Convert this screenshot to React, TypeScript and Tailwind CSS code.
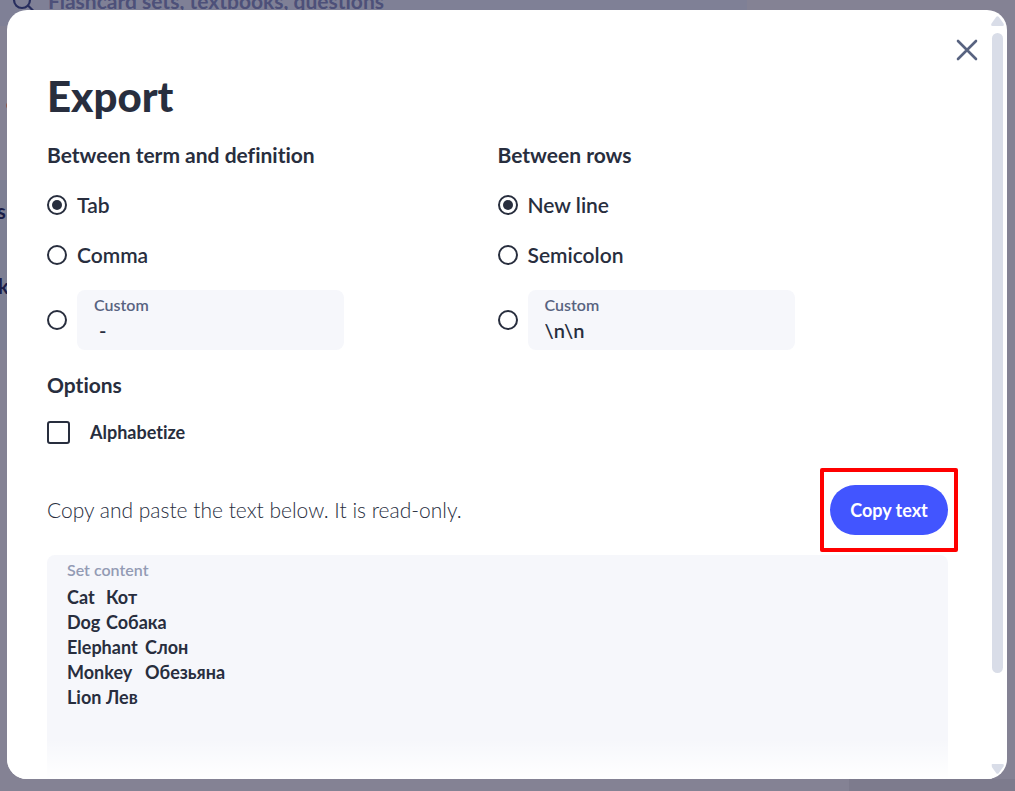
import { useState } from "react";

type Choice = { value: string; label: string };

type DelimiterProps = {
  title: string;
  name: string;
  choices: Choice[];
  custom: string;
};

function Radio({ id, name, checked, label, onSelect }: { id: string; name: string; checked: boolean; label?: string; onSelect: () => void }) {
  return (
    <input
      id={id}
      type="radio"
      name={name}
      checked={checked}
      aria-label={label}
      onChange={onSelect}
      className="size-5 shrink-0 appearance-none rounded-full border-2 border-[#282e3e] bg-white bg-clip-content p-[3px] checked:bg-[#282e3e]"
    />
  );
}

function DelimiterGroup({ title, name, choices, custom }: DelimiterProps) {
  const [selected, setSelected] = useState(choices[0].value);
  const [text, setText] = useState(custom);
  return (
    <fieldset className="min-w-0">
      <legend className="text-[21px] leading-6 font-bold">{title}</legend>
      <div className="mt-[25px] flex flex-col gap-[25px]">
        {choices.map((choice) => {
          const id = name + "-" + choice.value;
          return (
            <div key={choice.value} className="flex items-center gap-[10px]">
              <Radio id={id} name={name} checked={selected === choice.value} onSelect={() => setSelected(choice.value)} />
              <label htmlFor={id} className="text-[21px] leading-[25px] font-semibold">
                {choice.label}
              </label>
            </div>
          );
        })}
      </div>
      <div className="mt-[23px] flex items-center gap-[10px]">
        <Radio id={name + "-custom"} name={name} label="Custom separator" checked={selected === "custom"} onSelect={() => setSelected("custom")} />
        <div className="flex h-[60px] w-[267px] flex-col rounded-lg bg-[#f6f7fb] px-[17px] pt-[5px]">
          <label htmlFor={name + "-text"} className="text-base leading-5 font-semibold text-[#586380]">
            Custom
          </label>
          <input
            id={name + "-text"}
            type="text"
            value={text}
            onChange={(event) => setText(event.target.value)}
            className="w-full bg-transparent text-xl leading-[30px] font-semibold outline-none"
          />
        </div>
      </div>
    </fieldset>
  );
}

const SET_CONTENT = ["Cat\tКот", "Dog\tСобака", "Elephant\tСлон", "Monkey\tОбезьяна", "Lion\tЛев"].join("\n");

function Backdrop() {
  return (
    <div aria-hidden="true" className="absolute inset-0 overflow-hidden bg-[#848294]">
      <div className="absolute top-0 left-0 h-[26px] w-[747px] bg-[#7f8096]" />
      <div className="absolute right-0 bottom-0 left-[849px] h-3 bg-[#7d7b8d]" />
      <svg className="absolute -top-[10px] left-[11px]" width="24" height="24" viewBox="0 0 24 24" fill="none" stroke="#282e5e" strokeWidth="2.2">
        <circle cx="11" cy="10" r="8" />
        <path d="M17 15.500l6 6" />
      </svg>
      <span className="absolute -top-[11px] left-12 text-[21px] leading-6 font-bold whitespace-nowrap text-[#4d5079]">Flashcard sets, textbooks, questions</span>
      <div className="absolute top-[180px] left-0 h-[170px] w-[7px] bg-[#7d7f93]" />
      <span className="absolute top-[102px] left-[6px] size-[7px] rounded-full bg-[#8b5a50]" />
      <span className="absolute top-[199px] -left-[3px] text-xl leading-6 font-bold text-[#1a1d48]">s</span>
      <span className="absolute top-[274px] -left-[2px] text-xl leading-6 font-bold text-[#1a1d48]">k</span>
    </div>
  );
}

function ScrollTrack() {
  return (
    <div aria-hidden="true" className="flex w-[15px] shrink-0 flex-col items-center pt-[6px] pr-1 pb-[5px]">
      <svg width="13" height="10" viewBox="0 0 13 10" fill="#d9dde8" className="shrink-0">
        <path d="M5.300.8Q6.500-.5 7.700.8L12.500 7.500Q13.500 10 11.500 10H1.500Q-.5 10 .5 7.500Z" />
      </svg>
      <div className="mt-[7px] flex w-[11px] flex-1 flex-col">
        <div className="h-7/8 rounded-full bg-[#d9dde8]" />
      </div>
      <svg width="13" height="10" viewBox="0 0 13 10" fill="#d9dde8" className="shrink-0">
        <path d="M5.300 9.200Q6.500 10.500 7.700 9.200L12.500 2.500Q13.500 0 11.500 0H1.500Q-.5 0 .5 2.500Z" />
      </svg>
    </div>
  );
}

export default function App() {
  const [alphabetize, setAlphabetize] = useState(false);
  return (
    <div className="relative flex h-screen pt-[10px] pr-2 pb-3 pl-[7px] font-['Lato','Liberation_Sans',sans-serif] text-[#282e3e] [font-variant-ligatures:none]">
      <Backdrop />
      <div role="dialog" aria-modal="true" aria-labelledby="export-title" className="relative flex min-w-0 flex-1 overflow-hidden rounded-[20px] bg-white">
        <div className="flex min-w-0 flex-1 flex-col overflow-hidden pt-[62px] pr-11 pl-10">
          <h1 id="export-title" className="text-[42px] leading-[48px] font-black">
            Export
          </h1>
          <div className="mt-[23px] grid grid-cols-2">
            <DelimiterGroup
              title="Between term and definition"
              name="term"
              choices={[
                { value: "tab", label: "Tab" },
                { value: "comma", label: "Comma" },
              ]}
              custom=" -"
            />
            <DelimiterGroup
              title="Between rows"
              name="row"
              choices={[
                { value: "newline", label: "New line" },
                { value: "semicolon", label: "Semicolon" },
              ]}
              custom="\n\n"
            />
          </div>
          <h2 className="mt-[23px] text-[21px] leading-6 font-bold">Options</h2>
          <div className="mt-6 flex items-center gap-5">
            <input
              id="alphabetize"
              type="checkbox"
              checked={alphabetize}
              onChange={(event) => setAlphabetize(event.target.checked)}
              className="size-[23px] shrink-0 appearance-none rounded-[3px] border-2 border-[#282e3e] bg-white bg-clip-content p-1 checked:bg-[#282e3e]"
            />
            <label htmlFor="alphabetize" className="text-lg leading-[23px] font-bold">
              Alphabetize
            </label>
          </div>
          <div className="mt-[41px] flex items-center justify-between">
            <p className="text-[21px] leading-6 font-light">Copy and paste the text below. It is read-only.</p>
            <div className="relative">
              <button type="button" className="block h-[50px] w-[118px] rounded-full bg-[#4255ff] text-lg leading-6 font-bold text-white">
                Copy text
              </button>
              <div aria-hidden="true" className="pointer-events-none absolute -inset-x-[10px] -top-[17px] -bottom-[17px] rounded-[2px] border-4 border-[#ff0000]" />
            </div>
          </div>
          <div className="mt-5 flex min-h-0 flex-1 flex-col rounded-t-lg bg-[#f6f7fb] px-5 pt-[5px]">
            <label htmlFor="set-content" className="text-base leading-5 font-semibold text-[#939bb4]">
              Set content
            </label>
            <textarea
              id="set-content"
              readOnly
              value={SET_CONTENT}
              className="mt-[5px] min-h-0 w-full flex-1 resize-none overflow-hidden bg-transparent text-lg leading-[25px] font-bold outline-none [tab-size:39px]"
            />
          </div>
        </div>
        <ScrollTrack />
        <div aria-hidden="true" className="pointer-events-none absolute right-[15px] bottom-0 left-0 h-10 bg-linear-to-b from-white/0 to-white" />
        <button type="button" aria-label="Close" className="absolute top-6 right-6 flex size-8 items-center justify-center text-[#586380]">
          <svg width="22" height="22" viewBox="0 0 22 22" fill="none" stroke="currentColor" strokeWidth="2.600" strokeLinecap="round">
            <path d="M2 2l18 18M20 2L2 20" />
          </svg>
        </button>
      </div>
    </div>
  );
}
